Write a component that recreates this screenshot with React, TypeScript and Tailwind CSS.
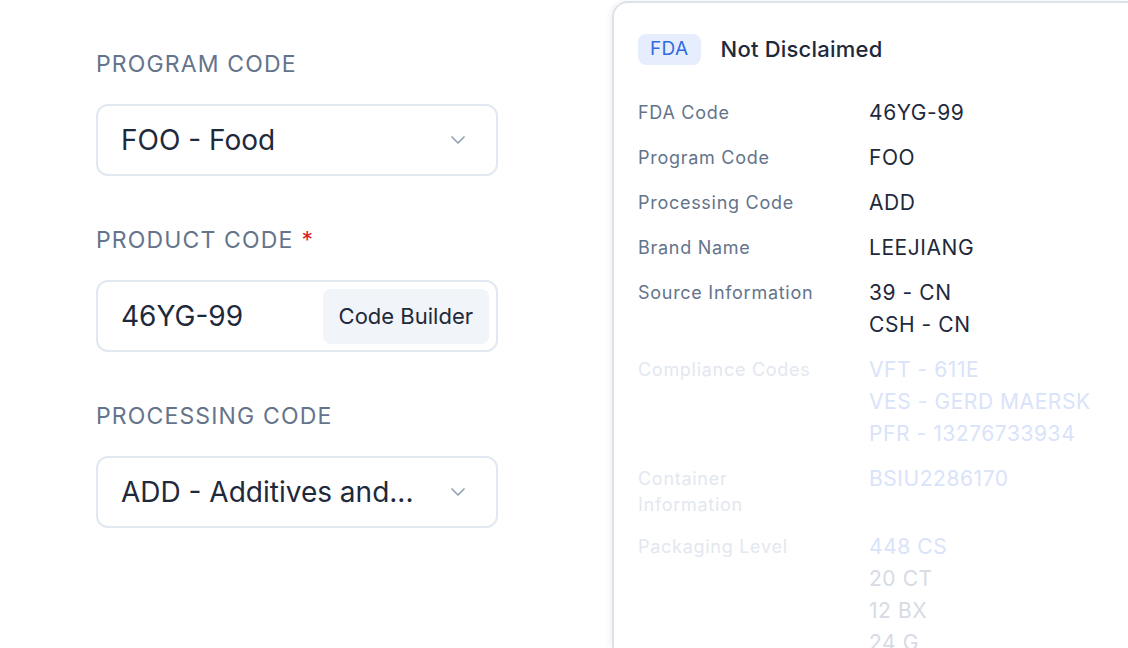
import { ChevronDown } from 'lucide-react'

const rows = [
  { label: 'FDA Code', values: ['46YG-99'] },
  { label: 'Program Code', values: ['FOO'] },
  { label: 'Processing Code', values: ['ADD'] },
  { label: 'Brand Name', values: ['LEEJIANG'] },
  { label: 'Source Information', values: ['39 - CN', 'CSH - CN'] },
]

// faded rows under the fold
const fadedRows = [
  { label: 'Compliance Codes', values: ['VFT - 611E', 'VES - GERD MAERSK', 'PFR - 13276733934'] },
  { label: 'Container Information', values: ['BSIU2286170'] },
]

function FieldLabel({ children, required }: { children: string; required?: boolean }) {
  return (
    <div className="text-[23px] leading-[32px] tracking-[0.05em] text-[#64748b] mb-6">
      {children}
      {required && <span className="ml-2 text-[#e11d2a]">*</span>}
    </div>
  )
}

function SelectBox({ value }: { value: string }) {
  return (
    <div className="h-[72px] w-[402px] rounded-xl border-2 border-[#e2e8f0] bg-white flex items-center justify-between pl-[23px] pr-[26px]">
      <span className="text-[28px] text-[#1e293b] truncate">{value}</span>
      <ChevronDown className="w-6 h-6 text-[#94a3b8]" strokeWidth={1.75} />
    </div>
  )
}

export default function App() {
  return (
    <div className="w-[1128px] h-[648px] overflow-hidden bg-white flex font-['Inter',sans-serif]">
      {/* Form column */}
      <div className="w-[612px] shrink-0 pl-[96px] pt-[48px] flex flex-col gap-12">
        <div>
          <FieldLabel>PROGRAM CODE</FieldLabel>
          <SelectBox value="FOO - Food" />
        </div>
        <div>
          <FieldLabel required>PRODUCT CODE</FieldLabel>
          <div className="h-[72px] w-[402px] rounded-xl border-2 border-[#e2e8f0] bg-white flex items-center justify-between pl-[23px] pr-[7px]">
            <span className="text-[28px] text-[#1e293b]">46YG-99</span>
            <button className="h-[55px] px-4 rounded-lg bg-[#f1f4f9] text-[22px] text-[#1e293b]">Code Builder</button>
          </div>
        </div>
        <div>
          <FieldLabel>PROCESSING CODE</FieldLabel>
          <SelectBox value="ADD - Additives and..." />
        </div>
      </div>

      {/* Summary card */}
      <div className="flex-1 mt-[1px] rounded-tl-2xl border-l-2 border-t-2 border-[#dde2ea] shadow-[-2px_0_6px_rgba(15,23,42,0.06)] pl-[24px] pt-[30px]">
        <div className="flex items-center gap-5 mb-[31px]">
          <span className="h-[31px] px-[12px] rounded-lg bg-[#e6eefd] text-[#2f6be4] text-[19px] tracking-[0.02em] flex items-center">FDA</span>
          <span className="text-[22px] font-medium tracking-[0.01em] text-[#1e293b]">Not Disclaimed</span>
        </div>
        <div className="flex flex-col gap-[13px] tracking-[0.035em]">
          {rows.map((r) => (
            <div key={r.label} className="flex">
              <div className="w-[231px] pt-[3px] text-[18px] leading-[26px] tracking-[0.04em] text-[#64748b]">{r.label}</div>
              <div className="text-[21px] leading-[32px] text-[#1e293b]">
                {r.values.map((v) => (
                  <div key={v}>{v}</div>
                ))}
              </div>
            </div>
          ))}
          {fadedRows.map((r) => (
            <div key={r.label} className="flex">
              <div className="w-[180px] mr-[51px] pt-[3px] text-[18px] leading-[26px] tracking-[0.04em] text-[#e3e7ef]">{r.label}</div>
              <div className="text-[21px] leading-[32px] text-[#d9e3fa]">
                {r.values.map((v) => (
                  <div key={v}>{v}</div>
                ))}
              </div>
            </div>
          ))}
          <div className="flex">
            <div className="w-[231px] pt-[3px] text-[18px] leading-[26px] tracking-[0.04em] text-[#e3e7ef]">Packaging Level</div>
            <div className="text-[21px] leading-[32px] text-[#d6dbe4]">
              <div className="text-[#d9e3fa]">448 CS</div>
              <div>20 CT</div>
              <div>12 BX</div>
              <div>24 G</div>
            </div>
          </div>
        </div>
      </div>
    </div>
  )
}
